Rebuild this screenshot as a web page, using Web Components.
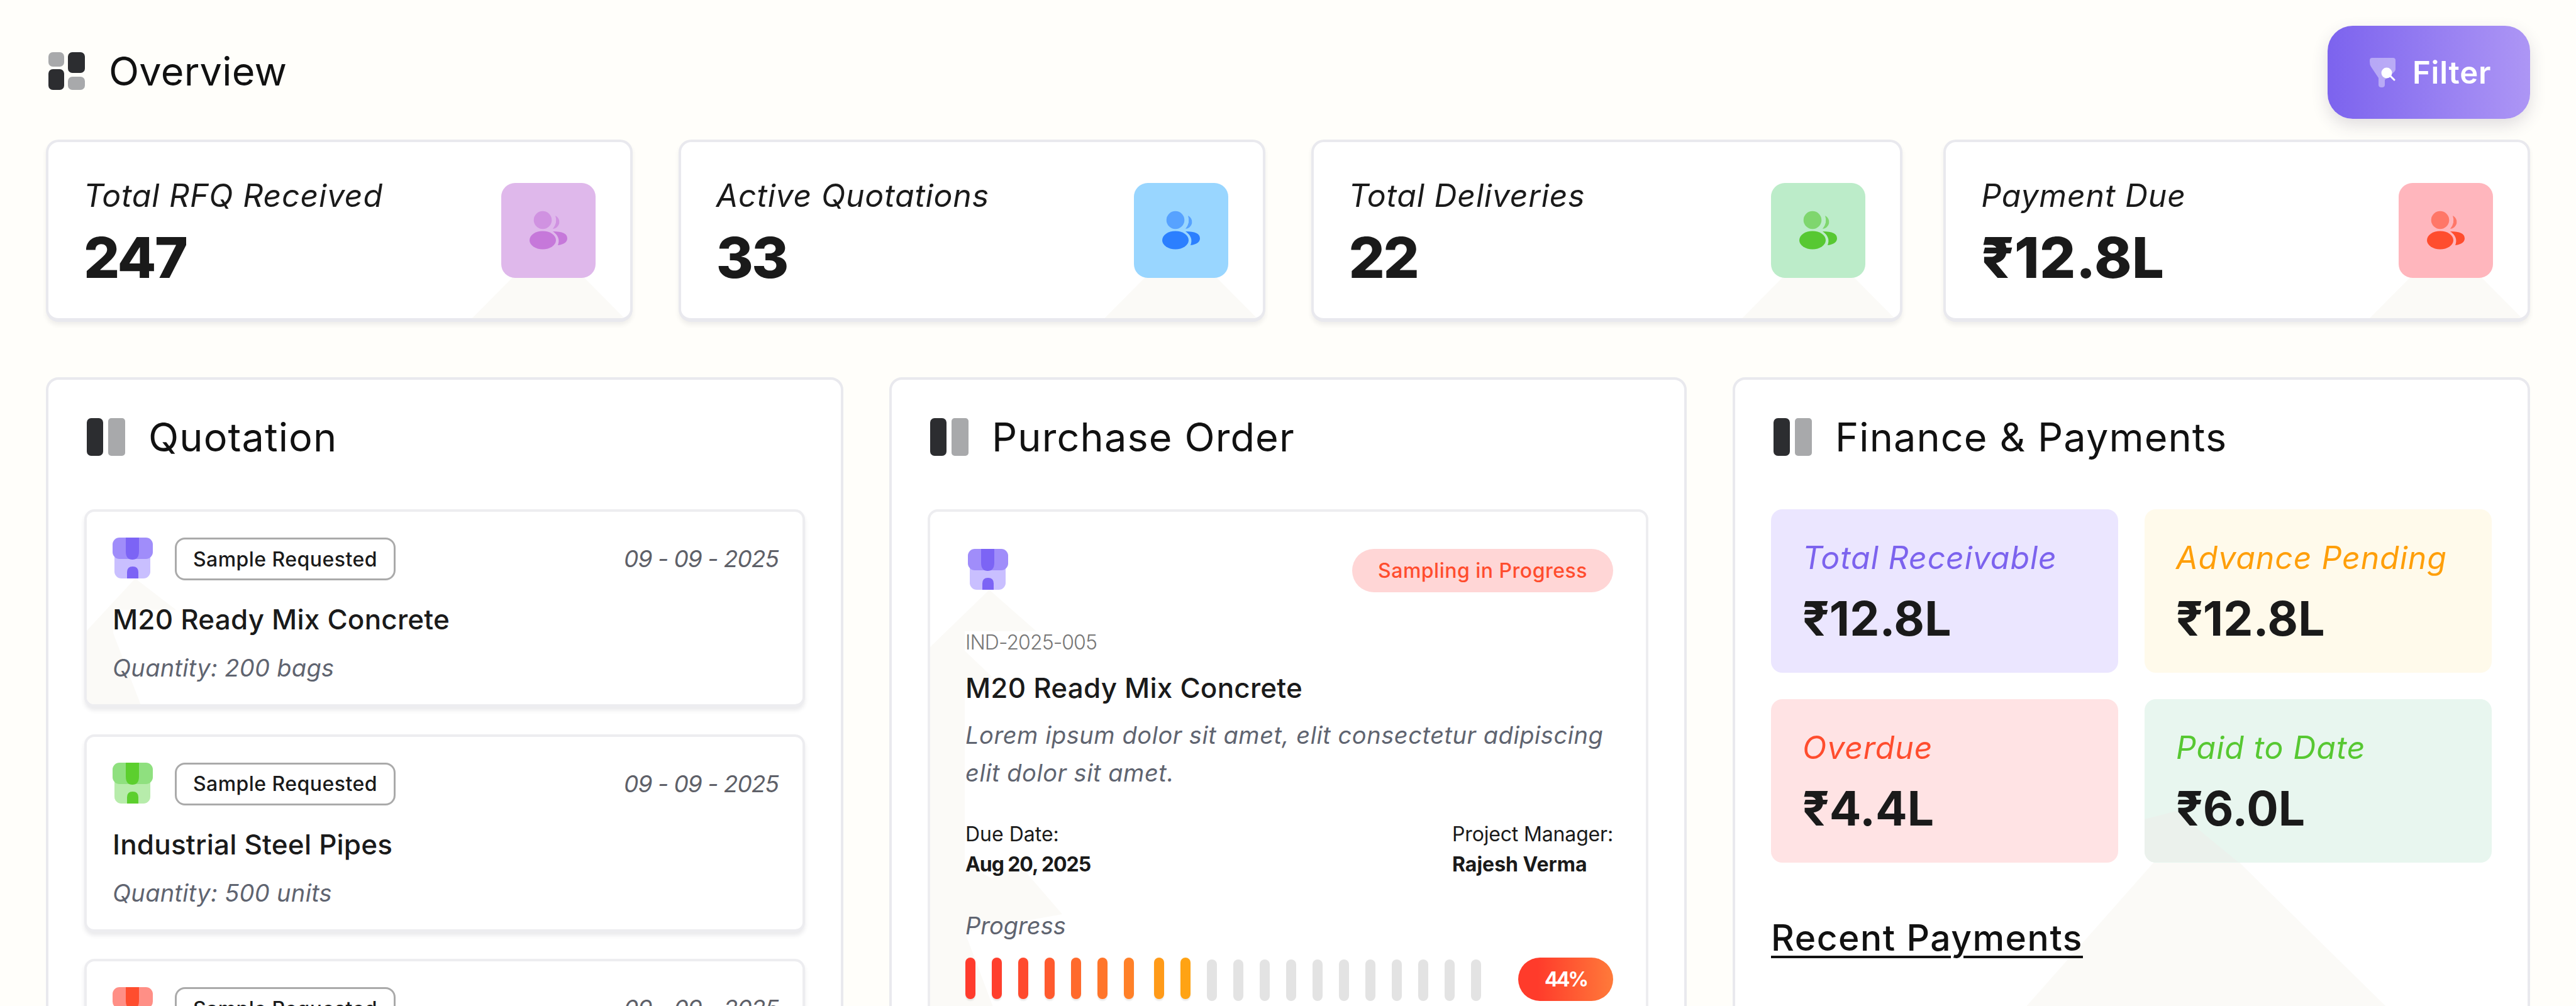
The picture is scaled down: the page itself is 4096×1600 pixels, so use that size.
<!DOCTYPE html>
<html>
<head>
<meta charset="utf-8">
<title>Overview</title>
<style>
  html, body { margin: 0; background: #fffefa; }
  body { width: 4096px; height: 1600px; overflow: hidden; font-family: Inter, "Noto Sans", sans-serif; color: #1a1a1a; }
</style>
</head>
<body>
<dash-app>
  <section-head slot="head" kind="grid" big>Overview</section-head>
  <filter-button slot="head">Filter</filter-button>

  <stat-card slot="stats" label="Total RFQ Received" value="247" tile="#dfb8eb" ink="#c678da"></stat-card>
  <stat-card slot="stats" label="Active Quotations" value="33" tile="#99d6ff" ink="#2b7fff"></stat-card>
  <stat-card slot="stats" label="Total Deliveries" value="22" tile="#bcecc9" ink="#57c832" wide></stat-card>
  <stat-card slot="stats" label="Payment Due" value="₹12.8L" tile="#ffb6bd" ink="#ff4d2e"></stat-card>

  <panel-card slot="panels" heading="Quotation">
    <quote-card tone="purple" deco title-text="M20 Ready Mix Concrete" qty="Quantity: 200 bags"></quote-card>
    <quote-card tone="green" title-text="Industrial Steel Pipes" qty="Quantity: 500 units"></quote-card>
    <quote-card tone="red"></quote-card>
  </panel-card>

  <panel-card slot="panels" heading="Purchase Order">
    <order-card></order-card>
  </panel-card>

  <panel-card slot="panels" heading="Finance &amp; Payments" deco>
    <finance-grid>
      <finance-tile label="Total Receivable" value="₹12.8L" bg="#ebe6ff" ink="#7c63ee"></finance-tile>
      <finance-tile label="Advance Pending" value="₹12.8L" bg="#fffaeb" ink="#ff9f0a"></finance-tile>
      <finance-tile label="Overdue" value="₹4.4L" bg="#ffe3e4" ink="#ff4d2e"></finance-tile>
      <finance-tile label="Paid to Date" value="₹6.0L" bg="#e8f6ef" ink="#57c832" deco></finance-tile>
    </finance-grid>
    <recent-list></recent-list>
  </panel-card>
</dash-app>

<script>
const STORE_TONES = {
  purple: ["#c9bfff", "#a08dfa", "#7c64f5"],
  green: ["#b7ecab", "#8fe07f", "#5ccf2e"],
  red: ["#ffc0ba", "#ff8f86", "#ff4d2e"],
};

class DashApp extends HTMLElement {
  constructor() {
    super();
    this.attachShadow({ mode: "open" });
    this.shadowRoot.innerHTML = `
      <style>
        :host { display: block; height: 1600px; overflow: hidden; box-sizing: border-box; padding: 41px 73px 0; }
        .head { display: flex; justify-content: space-between; align-items: flex-start; height: 148px; margin-bottom: 33px; }
        .stats { display: grid; grid-template-columns: repeat(4, 1fr); gap: 73px; margin-bottom: 88px; }
        .panels { display: grid; grid-template-columns: repeat(3, 1fr); gap: 73px; }
      </style>
      <div class="head"><slot name="head"></slot></div>
      <div class="stats"><slot name="stats"></slot></div>
      <div class="panels"><slot name="panels"></slot></div>
    `;
  }
}

class SectionHead extends HTMLElement {
  constructor() {
    super();
    this.attachShadow({ mode: "open" });
    const grid = this.getAttribute("kind") === "grid";
    const icon = grid
      ? `<svg width="58" height="60" viewBox="0 0 58 60">
           <rect x="0" y="0" width="25" height="23" rx="7" fill="#a8a9ab"/>
           <rect x="31" y="0" width="27" height="33" rx="7" fill="#2c2d30"/>
           <rect x="0" y="27" width="25" height="33" rx="7" fill="#2c2d30"/>
           <rect x="31" y="39" width="27" height="21" rx="7" fill="#a8a9ab"/>
         </svg>`
      : `<svg width="61" height="60" viewBox="0 0 61 60">
           <rect x="0" y="0" width="26" height="60" rx="7" fill="#2c2d30"/>
           <rect x="34" y="0" width="27" height="60" rx="5" fill="#a8a9ab"/>
         </svg>`;
    this.shadowRoot.innerHTML = `
      <style>
        :host { display: flex; align-items: center; gap: 37px; font-size: 63px; line-height: 60px; color: #111; }
        :host([big]) { height: 144px; gap: 38px; }
        svg { flex: none; margin-left: 4px; }
        span { letter-spacing: 1.1px; }
        :host([big]) span { letter-spacing: .2px; }
      </style>
      ${icon}<span><slot></slot></span>
    `;
  }
}

class FilterButton extends HTMLElement {
  constructor() {
    super();
    this.attachShadow({ mode: "open" });
    this.shadowRoot.innerHTML = `
      <style>
        :host { display: flex; align-items: center; gap: 27px; box-sizing: border-box; width: 322px; height: 148px; padding-left: 67px;
          border-radius: 40px; background: linear-gradient(90deg, #7c63ee, #ad96f5); box-shadow: 0 10px 26px rgba(60, 50, 90, .16);
          color: #fff; font-size: 49px; font-weight: 600; letter-spacing: .8px; }
      </style>
      <svg width="41" height="47" viewBox="0 0 41 47">
        <path d="M4 0H37Q41 0 41 4V18Q41 21 37 24L24 35V43Q24 47 19 47Q14 47 14 43V32L2 14Q0 11 0 6V4Q0 0 4 0Z" fill="#fff" fill-opacity=".4"/>
        <circle cx="27" cy="24" r="8.5" fill="#fff"/>
        <path d="M33 29L39 35" stroke="#fff" stroke-width="3" stroke-linecap="round"/>
      </svg>
      <span><slot></slot></span>
    `;
  }
}

class StatCard extends HTMLElement {
  constructor() {
    super();
    this.attachShadow({ mode: "open" });
    const ink = this.getAttribute("ink");
    const value = this.getAttribute("value");
    this.shadowRoot.innerHTML = `
      <style>
        :host { display: flex; justify-content: space-between; align-items: flex-start; position: relative; overflow: hidden; box-sizing: border-box; height: 290px;
          padding: 55px 55px 0 56px; background: #fff; border: 4px solid #e9e9ee; border-bottom-width: 6px; border-radius: 20px; box-shadow: 0 5px 6px rgba(60, 60, 80, .08); }
        :host([wide]) { margin-right: -8px; }
        .deco { position: absolute; right: 9px; bottom: 0; width: 242px; height: 122px; background: #fbfaf7; clip-path: polygon(50% 0, 100% 100%, 0 100%); }
        .text, .tile { position: relative; }
        .label { font-size: 50px; line-height: 60px; font-style: italic; letter-spacing: .8px; }
        .value { font-size: 90px; line-height: 100px; font-weight: 800; margin-top: 19px; letter-spacing: ${value.length > 3 ? 0.3 : -2.5}px; }
        .tile { width: 150px; height: 151px; margin-top: 10px; border-radius: 22px; display: flex; align-items: center; justify-content: center; background: ${this.getAttribute("tile")}; }
      </style>
      <div class="deco"></div>
      <div class="text">
        <div class="label">${this.getAttribute("label")}</div>
        <div class="value">${value}</div>
      </div>
      <div class="tile">
        <svg width="150" height="151" viewBox="0 0 150 151">
          <circle cx="66" cy="59" r="14.3" fill="${ink}" fill-opacity=".6"/>
          <path d="M86 52A11 11 0 0 1 82 73Q90 63 86 52Z" fill="${ink}" fill-opacity=".6"/>
          <ellipse cx="66" cy="91" rx="21" ry="14.5" fill="${ink}"/>
          <path d="M82 77Q105 77 105 88Q105 97 90 99Q95 86 82 77Z" fill="${ink}"/>
        </svg>
      </div>
    `;
  }
}

class PanelCard extends HTMLElement {
  constructor() {
    super();
    this.attachShadow({ mode: "open" });
    this.shadowRoot.innerHTML = `
      <style>
        :host { display: block; position: relative; box-sizing: border-box; height: 1100px; padding: 61px 57px 0; background: #fff; border: 4px solid #e9e9ee; border-radius: 20px; }
        .deco { display: none; position: absolute; inset: 0; background: #fbfaf7; clip-path: polygon(375px 1096px, 667px 766px, 800px 766px, 1136px 1096px); }
        :host([deco]) .deco { display: block; }
        .body { position: relative; display: flex; flex-direction: column; gap: 42.67px; }
        section-head { margin-bottom: 85px; height: 60px; }
      </style>
      <div class="deco"></div>
      <div class="body" style="gap:0">
        <section-head>${this.getAttribute("heading")}</section-head>
        <div class="body"><slot></slot></div>
      </div>
    `;
  }
}

class StoreIcon extends HTMLElement {
  constructor() {
    super();
    this.attachShadow({ mode: "open" });
    const [body, side, dark] = STORE_TONES[this.getAttribute("tone")];
    this.shadowRoot.innerHTML = `
      <style>:host { display: block; width: 64px; height: 65px; flex: none; } svg { display: block; }</style>
      <svg width="64" height="65" viewBox="0 0 64 65">
        <rect x="3" y="15" width="57" height="50" rx="11" fill="${body}"/>
        <rect x="0" y="0" width="64" height="34" rx="11" fill="${side}"/>
        <path d="M21 0H42V22Q42 35 31.500 35Q21 35 21 22Z" fill="${dark}"/>
        <path d="M23 65V55Q23 46 32 46Q41 46 41 55V65Z" fill="${dark}"/>
      </svg>
    `;
  }
}

class QuoteCard extends HTMLElement {
  constructor() {
    super();
    this.attachShadow({ mode: "open" });
    const title = this.getAttribute("title-text");
    const qty = this.getAttribute("qty");
    this.shadowRoot.innerHTML = `
      <style>
        :host { display: block; position: relative; overflow: hidden; box-sizing: border-box; height: 315px; padding: 41px 38px 0 41px; background: #fff;
          border: 4px solid #ededf0; border-bottom-width: 5px; border-radius: 16px; box-shadow: 0 5px 6px rgba(60, 60, 80, .1); }
        .deco { display: none; position: absolute; inset: 0; background: #fbfaf7; clip-path: polygon(77px 106px, 142px 156px, 42px 156px, 42px 193px, 87px 310px, 0 310px, 0 189px); }
        :host([deco]) .deco { display: block; }
        .row, .name, .qty { position: relative; }
        .row { display: flex; align-items: flex-start; }
        .badge { box-sizing: border-box; height: 68px; margin-left: 35px; padding: 0 26px; display: flex; align-items: center; border: 3px solid #aaa; border-radius: 16px;
          font-size: 32px; font-weight: 500; letter-spacing: .45px; }
        .date { margin-left: auto; font-size: 37px; line-height: 68px; font-style: italic; color: #5e6068; letter-spacing: -.94px; }
        .name { margin-top: 32px; font-size: 44px; line-height: 60px; font-weight: 500; letter-spacing: .2px; }
        .qty { margin-top: 19px; font-size: 38px; line-height: 56px; font-style: italic; color: #5f6470; letter-spacing: .3px; }
      </style>
      <div class="deco"></div>
      <div class="row">
        <store-icon tone="${this.getAttribute("tone")}"></store-icon>
        <div class="badge">Sample Requested</div>
        <div class="date">09 - 09 - 2025</div>
      </div>
      ${title ? `<div class="name">${title}</div>` : ""}
      ${qty ? `<div class="qty">${qty}</div>` : ""}
    `;
  }
}

class ProgressMeter extends HTMLElement {
  constructor() {
    super();
    this.attachShadow({ mode: "open" });
    const done = ["#ff3b2d", "#ff3f2d", "#ff4a2e", "#ff5a2e", "#ff6a2c", "#ff752a", "#ff8028", "#ff9a18", "#ffa314"];
    const bars = done.map((c, i) => `<i class="${i === 7 ? "skip" : ""}" style="background:${c}"></i>`).join("")
      + `<i class="off"></i>`.repeat(11);
    this.shadowRoot.innerHTML = `
      <style>
        :host { display: flex; justify-content: space-between; align-items: flex-start; }
        .bars { display: flex; gap: 26px; }
        i { display: block; width: 16px; height: 66px; border-radius: 8px; box-shadow: 0 3px 2px rgba(0, 0, 0, .08); }
        i.skip { margin-left: 6px; }
        i.off { background: #e3e3e3; margin-top: 3px; box-shadow: none; }
        .pct { width: 151px; height: 69px; border-radius: 35px; display: flex; align-items: center; justify-content: center;
          background: linear-gradient(90deg, #ff3b2b 20%, #ff7a3a); color: #fff; font-size: 32px; font-weight: 700; letter-spacing: -3px; }
      </style>
      <div class="bars">${bars}</div>
      <div class="pct">44%</div>
    `;
  }
}

class OrderCard extends HTMLElement {
  constructor() {
    super();
    this.attachShadow({ mode: "open" });
    this.shadowRoot.innerHTML = `
      <style>
        :host { display: block; position: relative; overflow: hidden; box-sizing: border-box; height: 900px; padding: 59px 52px 0 56px; background: #fff; border: 4px solid #ededf0; border-radius: 16px; }
        .deco { position: absolute; inset: 0; background: #fbfaf7;
          clip-path: polygon(94px 124px, 169px 190px, 55px 190px, 55px 221px, 98px 262px, 55px 290px, 55px 560px, 98px 583px, 141px 560px, 210px 640px, 55px 668px, 101px 790px, 0 790px, 0 215px); }
        .top, .id, .name, .desc, .meta, .lbl, progress-meter { position: relative; }
        .top { display: flex; justify-content: space-between; align-items: flex-start; }
        store-icon { margin-left: 4px; }
        .status { height: 69px; padding: 0 41px; border-radius: 35px; display: flex; align-items: center; background: #ffd6d6; color: #ff4d2e; font-size: 32px; font-weight: 500; letter-spacing: .49px; }
        .id { margin-top: 58px; font-size: 32px; line-height: 44px; font-weight: 300; color: #777; letter-spacing: -.93px; }
        .name { margin-top: 20px; font-size: 44px; line-height: 60px; font-weight: 500; letter-spacing: .2px; }
        .desc { margin-top: 15px; font-size: 38px; line-height: 60px; font-style: italic; color: #5f6470; letter-spacing: .55px; }
        .meta { display: flex; justify-content: space-between; margin-top: 44px; font-size: 32px; line-height: 48px; font-weight: 400; white-space: nowrap; }
        .meta b { display: block; font-weight: 700; }
        .meta b.tight { letter-spacing: -1.08px; }
        .meta div:last-child { width: 256px; letter-spacing: -.16px; }
        .meta div:last-child b { letter-spacing: 0; }
        .lbl { margin-top: 48px; font-size: 38px; line-height: 50px; font-style: italic; color: #5f6470; }
        progress-meter { margin-top: 26px; }
      </style>
      <div class="deco"></div>
      <div class="top">
        <store-icon tone="purple"></store-icon>
        <div class="status">Sampling in Progress</div>
      </div>
      <div class="id">IND-2025-005</div>
      <div class="name">M20 Ready Mix Concrete</div>
      <div class="desc">Lorem ipsum dolor sit amet, elit consectetur adipiscing elit dolor sit amet.</div>
      <div class="meta">
        <div>Due Date:<b class="tight">Aug 20, 2025</b></div>
        <div>Project Manager:<b>Rajesh Verma</b></div>
      </div>
      <div class="lbl">Progress</div>
      <progress-meter></progress-meter>
    `;
  }
}

class FinanceGrid extends HTMLElement {
  constructor() {
    super();
    this.attachShadow({ mode: "open" });
    this.shadowRoot.innerHTML = `
      <style>:host { display: grid; grid-template-columns: 1fr 1fr; gap: 42px; }</style>
      <slot></slot>
    `;
  }
}

class FinanceTile extends HTMLElement {
  constructor() {
    super();
    this.attachShadow({ mode: "open" });
    this.shadowRoot.innerHTML = `
      <style>
        :host { display: block; position: relative; overflow: hidden; box-sizing: border-box; height: 260px; padding: 45px 50px 0; border-radius: 18px; background: ${this.getAttribute("bg")}; }
        .deco { display: none; position: absolute; inset: 0; background: #ebf1ec; clip-path: polygon(50px 178px, 149px 259px, 0 259px, 0 191px); }
        :host([deco]) .deco { display: block; }
        .label, .value { position: relative; }
        .label { font-size: 50px; line-height: 64px; font-style: italic; letter-spacing: .9px; color: ${this.getAttribute("ink")}; }
        .value { margin-top: 20px; font-size: 75px; line-height: 90px; font-weight: 700; }
      </style>
      <div class="deco"></div>
      <div class="label">${this.getAttribute("label")}</div>
      <div class="value">${this.getAttribute("value")}</div>
    `;
  }
}

class RecentList extends HTMLElement {
  constructor() {
    super();
    this.attachShadow({ mode: "open" });
    this.shadowRoot.innerHTML = `
      <style>
        :host { display: block; position: relative; margin-top: 42px; }
        h3 { margin: 0; font-size: 57px; line-height: 70px; font-weight: 500; letter-spacing: 1.5px; color: #111; text-decoration: underline; text-underline-offset: 8px; text-decoration-thickness: 4px; }
        .row { margin: 74px 11px 0; height: 80px; background: #fff; border-top: 3px solid #efeff1; border-radius: 16px 16px 0 0; }
      </style>
      <h3>Recent Payments</h3>
      <div class="row"></div>
    `;
  }
}

// children first, so parents can use them right away
customElements.define("section-head", SectionHead);
customElements.define("filter-button", FilterButton);
customElements.define("stat-card", StatCard);
customElements.define("store-icon", StoreIcon);
customElements.define("quote-card", QuoteCard);
customElements.define("progress-meter", ProgressMeter);
customElements.define("order-card", OrderCard);
customElements.define("finance-grid", FinanceGrid);
customElements.define("finance-tile", FinanceTile);
customElements.define("recent-list", RecentList);
customElements.define("panel-card", PanelCard);
customElements.define("dash-app", DashApp);
</script>
</body>
</html>
